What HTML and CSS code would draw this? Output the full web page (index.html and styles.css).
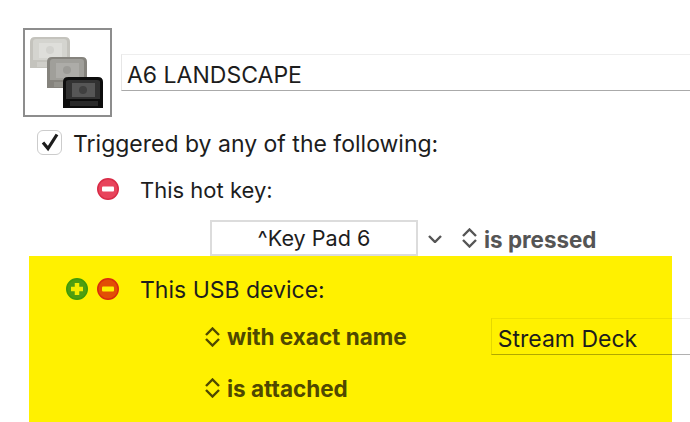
FILE: index.html
```html
<!DOCTYPE html>
<html lang="en">
<head>
    <meta charset="UTF-8">
    <title>A6 LANDSCAPE</title>
    <link rel="stylesheet" href="styles.css">
</head>
<body>

<div class="header">
    <div class="macro-icon">
        <svg width="85" height="85" viewBox="0 0 85 85">
            <defs>
                <filter id="soft"><feGaussianBlur stdDeviation="0.6"/></filter>
            </defs>
            <g filter="url(#soft)">
                <!-- light key -->
                <path d="M5 38V12q0-5 5-5h30q5 0 5 5v22l-1 4z" fill="#c4c3bd"/>
                <path d="M8 30V12q0-3 3-3h28q3 0 3 3v18z" fill="#d4d4cf"/>
                <rect x="14" y="13" width="23" height="15" fill="#dededa"/>
                <circle cx="25" cy="20" r="4" fill="#d2d2ce"/>
                <rect x="12" y="32" width="28" height="5" fill="#cfcec9"/>
                <!-- middle key -->
                <path d="M22 58V32q0-5 5-5h30q5 0 5 5v26z" fill="#85837d"/>
                <path d="M25 50V32q0-3 3-3h28q3 0 3 3v18z" fill="#a09f9a"/>
                <rect x="31" y="33" width="23" height="15" fill="#adaca8"/>
                <circle cx="42" cy="40" r="4" fill="#9c9b97"/>
                <rect x="29" y="52" width="28" height="5" fill="#93928c"/>
                <!-- dark key -->
                <path d="M38 78V52q0-5 5-5h30q5 0 5 5v26z" fill="#111"/>
                <path d="M41 69V52q0-2 3-2h28q3 0 3 2v17z" fill="#333"/>
                <rect x="47" y="53" width="23" height="14" fill="#565656"/>
                <circle cx="58" cy="60" r="4" fill="#404040"/>
                <rect x="45" y="71" width="28" height="5" fill="#2a2a2a"/>
            </g>
        </svg>
    </div>
    <div class="title-field">A6 LANDSCAPE</div>
</div>

<div class="trigger-head">
    <span class="checkbox">
        <svg width="20" height="20" viewBox="0 0 20 20">
            <path d="M3 10.5l5 6L17 2.5" fill="none" stroke="#1c1c1c" stroke-width="3.2"/>
        </svg>
    </span>
    <span>Triggered by any of the following:</span>
</div>

<div class="row hotkey-row">
    <svg width="22" height="22" viewBox="0 0 22 22">
        <circle cx="11" cy="11" r="10.25" fill="#e8445c" stroke="#d92b45" stroke-width="1.5"/>
        <rect x="5" y="8.5" width="12" height="5" rx="1" fill="#fff"/>
    </svg>
    <span class="row-label">This hot key:</span>
</div>

<div class="key-row">
    <div class="key-field">^Key Pad 6</div>
    <svg class="chevron" width="14" height="8" viewBox="0 0 14 8">
        <path d="M1 1l6 6 6-6" fill="none" stroke="#555" stroke-width="2.4"/>
    </svg>
    <svg class="updown" width="15" height="20" viewBox="0 0 15 20">
        <path d="M1 8l6.5-6.5L14 8M1 12l6.5 6.5L14 12" fill="none" stroke="#555" stroke-width="2.4"/>
    </svg>
    <span class="bold-gray">is pressed</span>
</div>

<div class="highlight">
    <div class="row usb-row">
        <svg class="plus-btn" width="22" height="22" viewBox="0 0 22 22">
            <circle cx="11" cy="11" r="10.25" fill="#4f9e10" stroke="#3f9a08" stroke-width="1.5"/>
            <path d="M11 5v12M5 11h12" stroke="#f3ee00" stroke-width="4.5"/>
        </svg>
        <svg width="22" height="22" viewBox="0 0 22 22">
            <circle cx="11" cy="11" r="10.25" fill="#e24f05" stroke="#d92a10" stroke-width="1.5"/>
            <rect x="5" y="8.5" width="12" height="5" rx="1" fill="#fff100"/>
        </svg>
        <span class="row-label">This USB device:</span>
    </div>
    <div class="condition name-row">
        <svg class="updown" width="15" height="20" viewBox="0 0 15 20">
            <path d="M1 8l6.5-6.5L14 8M1 12l6.5 6.5L14 12" fill="none" stroke="#4f4800" stroke-width="2.4"/>
        </svg>
        <span class="bold-olive">with exact name</span>
        <div class="name-field">Stream Deck</div>
    </div>
    <div class="condition attached-row">
        <svg class="updown" width="15" height="20" viewBox="0 0 15 20">
            <path d="M1 8l6.5-6.5L14 8M1 12l6.5 6.5L14 12" fill="none" stroke="#4f4800" stroke-width="2.4"/>
        </svg>
        <span class="bold-olive">is attached</span>
    </div>
</div>

</body>
</html>
```

FILE: styles.css
```css
html, body {
    height: 422px;
    overflow: hidden;
}

body {
    margin: 0;
    background-color: #fff;
    font-family: 'Inter', 'Liberation Sans', sans-serif;
    font-size: 23px;
    color: #1d1d1d;
}

svg {
    display: block;
    flex: none;
}

.header {
    display: flex;
    gap: 9px;
    padding: 28px 0 0 23px;
}

.macro-icon {
    width: 85px;
    height: 85px;
    border: 2px solid #8d8d8d;
}

.title-field {
    flex: 1;
    height: 37px;
    margin-top: 26px;
    padding-left: 5px;
    box-sizing: border-box;
    border-top: 1px solid #eee;
    border-left: 1px solid #e6e6e6;
    border-bottom: 1px solid #aaa;
    line-height: 41px;
}

.trigger-head {
    display: flex;
    align-items: center;
    gap: 11px;
    height: 26px;
    margin-top: 12px;
    padding-left: 37px;
}

.trigger-head span:last-child {
    padding-top: 3px;
}

.checkbox {
    display: flex;
    align-items: center;
    justify-content: center;
    width: 23px;
    height: 23px;
    border: 1px solid #ccc;
    border-radius: 6px;
}

.row {
    display: flex;
    align-items: center;
    height: 22px;
}

.hotkey-row {
    margin-top: 23px;
    padding-left: 97px;
}

.hotkey-row .row-label {
    font-size: 22px;
    padding-top: 2px;
}

.row-label {
    margin-left: 21px;
}

.usb-row .row-label {
    padding-top: 2px;
}

.key-row {
    display: flex;
    align-items: center;
    height: 36px;
    margin-top: 20px;
    padding-left: 210px;
}

.key-field {
    width: 208px;
    height: 36px;
    box-sizing: border-box;
    border: 2px solid #dcdcdc;
    font-size: 21.6px;
    text-align: center;
    line-height: 33px;
}

.chevron {
    margin-left: 10px;
    margin-top: 2px;
}

.updown {
    margin-right: 7px;
}

.key-row .updown {
    margin-left: 20px;
    margin-right: 7px;
}

.bold-gray {
    font-size: 22.4px;
    font-weight: 700;
    color: #555;
    padding-top: 2px;
}

.highlight {
    box-sizing: border-box;
    width: 643px;
    height: 166px;
    margin-left: 29px;
    padding-top: 22px;
    background-color: #fff100;
}

.usb-row {
    padding-left: 37px;
}

.plus-btn {
    margin-right: 9px;
}

.condition {
    display: flex;
    align-items: center;
    padding-left: 176px;
    white-space: nowrap;
}

.name-row {
    height: 37px;
    margin-top: 18px;
}

.attached-row {
    height: 26px;
    margin-top: 20px;
}

.bold-olive {
    font-size: 22.5px;
    font-weight: 700;
    color: #4f4800;
}

.name-field {
    flex: none;
    width: 199px;
    height: 37px;
    margin-left: 84px;
    padding-left: 6px;
    box-sizing: border-box;
    border-left: 1px solid rgba(0, 0, 0, 0.1);
    border-top: 1px solid rgba(0, 0, 0, 0.07);
    border-bottom: 1px solid rgba(0, 0, 0, 0.3);
    line-height: 41px;
}
```
